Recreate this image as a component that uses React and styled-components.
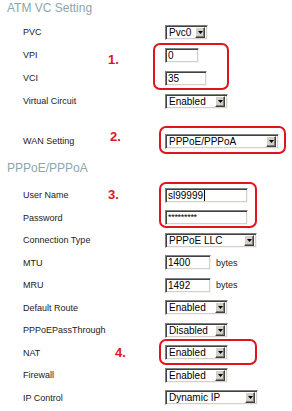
import React from "react";
import styled, { createGlobalStyle } from "styled-components";

const Global = createGlobalStyle`
  html, body { margin: 0; padding: 0; background: #fff; }
`;

const Page = styled.div`
  width: 292px;
  height: 411px;
  overflow: hidden;
  background: #fff;
  font-family: "Liberation Sans", Arial, sans-serif;
`;

const SectionTitle = styled.h2`
  margin: 0;
  box-sizing: border-box;
  height: ${(p) => p.$h}px;
  padding: ${(p) => p.$pt}px 0 0 7px;
  font-size: 12px;
  line-height: 14px;
  font-weight: normal;
  color: #8ba6ad;
`;

const Row = styled.div`
  display: grid;
  grid-template-columns: 165px 1fr;
  align-items: center;
  height: ${(p) => p.$h}px;
  margin-top: ${(p) => p.$gap || 0}px;
`;

const LabelCell = styled.div`
  position: relative;
  align-self: stretch;
  display: flex;
  align-items: center;
  padding-left: 23px;
  font-size: 9px;
  color: #222;
  white-space: nowrap;
`;

const Marker = styled.span`
  position: absolute;
  left: ${(p) => p.$x}px;
  top: ${(p) => p.$y}px;
  font-family: "Liberation Sans", Arial, sans-serif;
  font-weight: bold;
  font-size: 13px;
  line-height: 13px;
  color: #e0141c;
`;

const ControlCell = styled.div`
  position: relative;
  display: flex;
  align-items: center;
  gap: 5px;
  height: 15px;
`;

const sunken = `
  box-sizing: border-box;
  height: 15px;
  background: #fff;
  border: 1px solid;
  border-color: #808080 #f4f4f4 #f4f4f4 #808080;
  box-shadow: inset 1px 1px 0 #404040, inset -1px -1px 0 #d4d0c8;
  font-size: 10px;
  color: #000;
  white-space: nowrap;
`;

const SelectBox = styled.div`
  ${sunken}
  width: ${(p) => p.$w}px;
  display: flex;
  align-items: center;
  padding-left: 3px;
  padding-right: 2px;
`;

const SelectText = styled.span`
  flex: 1;
  line-height: 11px;
`;

const ArrowButton = styled.span`
  box-sizing: border-box;
  width: 10px;
  height: 11px;
  background: #d4d0c8;
  border: 1px solid;
  border-color: #fff #404040 #404040 #fff;
  box-shadow: inset -1px -1px 0 #808080;
  display: flex;
  align-items: center;
  justify-content: center;
`;

const TextBox = styled.div`
  ${sunken}
  width: ${(p) => p.$w}px;
  display: flex;
  align-items: center;
  padding-left: 2px;
  line-height: 11px;
`;

const Masked = styled.span`
  font-size: 9px;
  letter-spacing: -0.3px;
  align-self: flex-start;
  margin-top: 1px;
`;

const Caret = styled.span`
  display: inline-block;
  width: 1px;
  height: 11px;
  background: #000;
  margin-left: 1px;
`;

const Unit = styled.span`
  font-size: 9px;
  color: #222;
`;

const Highlight = styled.div`
  position: absolute;
  left: ${(p) => p.$l}px;
  top: ${(p) => p.$t}px;
  width: ${(p) => p.$w}px;
  height: ${(p) => p.$h}px;
  box-sizing: border-box;
  border: 2.5px solid #e0141c;
  border-radius: 7px;
  pointer-events: none;
`;

const Arrow = () => (
  <svg width="5" height="3" viewBox="0 0 5 3">
    <polygon points="0,0 5,0 2.5,3" fill="#000" />
  </svg>
);

const Select = ({ w, value }) => (
  <SelectBox $w={w}>
    <SelectText>{value}</SelectText>
    <ArrowButton>
      <Arrow />
    </ArrowButton>
  </SelectBox>
);

const Field = ({ row, h }) => (
  <Row $h={h} $gap={row.gap}>
    <LabelCell>
      {row.label}
      {row.marker && (
        <Marker $x={row.marker.x} $y={row.marker.y}>
          {row.marker.text}
        </Marker>
      )}
    </LabelCell>
    <ControlCell>
      {row.type === "select" && <Select w={row.w} value={row.value} />}
      {row.type === "text" && (
        <TextBox $w={row.w}>
          {row.value}
          {row.caret && <Caret />}
        </TextBox>
      )}
      {row.type === "password" && (
        <TextBox $w={row.w}>
          <Masked>{row.value}</Masked>
        </TextBox>
      )}
      {row.unit && <Unit>{row.unit}</Unit>}
      {row.box && (
        <Highlight $l={row.box.l} $t={row.box.t} $w={row.box.w} $h={row.box.h} />
      )}
    </ControlCell>
  </Row>
);

const atmRows = [
  { label: "PVC", type: "select", w: 43, value: "Pvc0" },
  {
    label: "VPI",
    type: "text",
    w: 34,
    value: "0",
    marker: { text: "1.", x: 108, y: 9 },
    box: { l: -12, t: -4.5, w: 76, h: 47 },
  },
  { label: "VCI", type: "text", w: 42, value: "35" },
  { label: "Virtual Circuit", type: "select", w: 63, value: "Enabled" },
  {
    label: "WAN Setting",
    type: "select",
    w: 114,
    value: "PPPoE/PPPoA",
    gap: 17,
    marker: { text: "2.", x: 110, y: 0.5 },
    box: { l: -6, t: -7.5, w: 127, h: 28 },
  },
];

const pppRows = [
  {
    label: "User Name",
    type: "text",
    w: 83,
    value: "sl99999",
    caret: true,
    marker: { text: "3.", x: 108, y: 3.75 },
    box: { l: -6, t: -5.5, w: 98, h: 46 },
  },
  { label: "Password", type: "password", w: 83, value: "*********" },
  { label: "Connection Type", type: "select", w: 92, value: "PPPoE LLC" },
  { label: "MTU", type: "text", w: 46, value: "1400", unit: "bytes" },
  { label: "MRU", type: "text", w: 46, value: "1492", unit: "bytes" },
  { label: "Default Route", type: "select", w: 63, value: "Enabled" },
  { label: "PPPoEPassThrough", type: "select", w: 63, value: "Disabled" },
  {
    label: "NAT",
    type: "select",
    w: 63,
    value: "Enabled",
    marker: { text: "4.", x: 115, y: 4.25 },
    box: { l: -6, t: -6, w: 98, h: 26 },
  },
  { label: "Firewall", type: "select", w: 63, value: "Enabled" },
  { label: "IP Control", type: "select", w: 93, value: "Dynamic IP" },
];

export default function App() {
  return (
    <Page>
      <Global />
      <SectionTitle $h={20.5} $pt={0.7}>
        ATM VC Setting
      </SectionTitle>
      {atmRows.map((r) => (
        <Field key={r.label} row={r} h={23} />
      ))}
      <SectionTitle $h={31.25} $pt={8.1}>
        PPPoE/PPPoA
      </SectionTitle>
      {pppRows.map((r) => (
        <Field key={r.label} row={r} h={22.5} />
      ))}
    </Page>
  );
}
